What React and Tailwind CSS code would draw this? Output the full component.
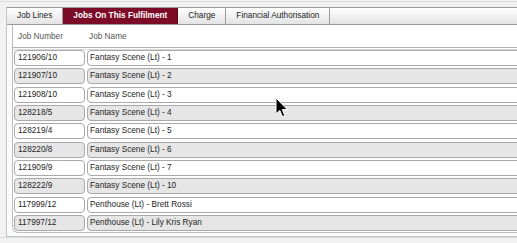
import React from "react";

const rows = [
  ["121906/10", "Fantasy Scene (Lt) - 1"],
  ["121907/10", "Fantasy Scene (Lt) - 2"],
  ["121908/10", "Fantasy Scene (Lt) - 3"],
  ["128218/5", "Fantasy Scene (Lt) - 4"],
  ["128219/4", "Fantasy Scene (Lt) - 5"],
  ["128220/8", "Fantasy Scene (Lt) - 6"],
  ["121909/9", "Fantasy Scene (Lt) - 7"],
  ["128222/9", "Fantasy Scene (Lt) - 10"],
  ["117999/12", "Penthouse (Lt) - Brett Rossi"],
  ["117997/12", "Penthouse (Lt) - Lily Kris Ryan"],
];

function Tab({ children, active }) {
  if (active) {
    return (
      <div className="h-full flex items-center px-[10px] bg-[#7b0b27] text-white font-bold border-r border-[#5e0a1e]">
        {children}
      </div>
    );
  }
  return (
    <div className="h-full flex items-center px-[10px] text-[#222] border-r border-[#9c9c9c]">
      {children}
    </div>
  );
}

export default function App() {
  return (
    <div
      className="relative w-[517px] h-[243px] overflow-hidden bg-[#f2f2f2] text-[8.25px] leading-none"
      style={{ fontFamily: '"Liberation Sans", Arial, sans-serif' }}
    >
      <div className="h-[7px] border-t border-[#dadada] mt-[1px] -mb-[1px]" />
      <div className="ml-[6px] w-[560px] h-[230px] border-l border-b border-[#c4c4c4] bg-[#fbfbfb] flex flex-col">
        <div className="h-[18px] flex border-t border-b border-[#9a9a9a] bg-gradient-to-b from-white to-[#e3e3e3]">
          <Tab>Job Lines</Tab>
          <Tab active>Jobs On This Fulfilment</Tab>
          <Tab>Charge</Tab>
          <Tab>Financial Authorisation</Tab>
        </div>
        <div className="pl-[5px] pt-[0px] flex-1">
          <div className="h-[208px] border-l border-b border-[#bdbdbd] rounded-bl-[6px] bg-white">
            <div className="h-[22px] flex items-center text-[#555] pt-[3px]">
              <div className="w-[75px] pl-[5px]">Job Number</div>
              <div className="pl-[1px]">Job Name</div>
            </div>
            <div className="h-[3px] border-t border-b border-[#b4b4b4] border-b-[#d8d8d8]" />
            <div className="pl-[1px]">
              {rows.map(([num, name], i) => {
                const bg = i % 2 === 0 ? "bg-white" : "bg-[#e6e6e6]";
                return (
                  <div key={num} className="h-[18.33px] flex gap-[2px] text-[#1e1e1e]">
                    <div className={`w-[71px] h-[16px] border border-[#a9a9a9] rounded-[4px] flex items-center pl-[3px] ${bg}`}>
                      {num}
                    </div>
                    <div className={`flex-1 h-[16px] border border-[#a9a9a9] rounded-[4px] flex items-center pl-[2px] ${bg}`}>
                      {name}
                    </div>
                  </div>
                );
              })}
            </div>
          </div>
        </div>
      </div>
      <div className="h-[1px] bg-[#cfe0ea]" />
      <svg
        className="absolute left-[275px] top-[97px]"
        width="14"
        height="23"
        viewBox="0 0 14 23"
      >
        <path
          d="M1 1 L1 17 L4.8 13.4 L7.4 19.6 L9.8 18.6 L7.3 12.6 L12.3 12.6 Z"
          fill="#000"
          stroke="#fff"
          strokeWidth="1"
          strokeLinejoin="round"
        />
      </svg>
    </div>
  );
}
